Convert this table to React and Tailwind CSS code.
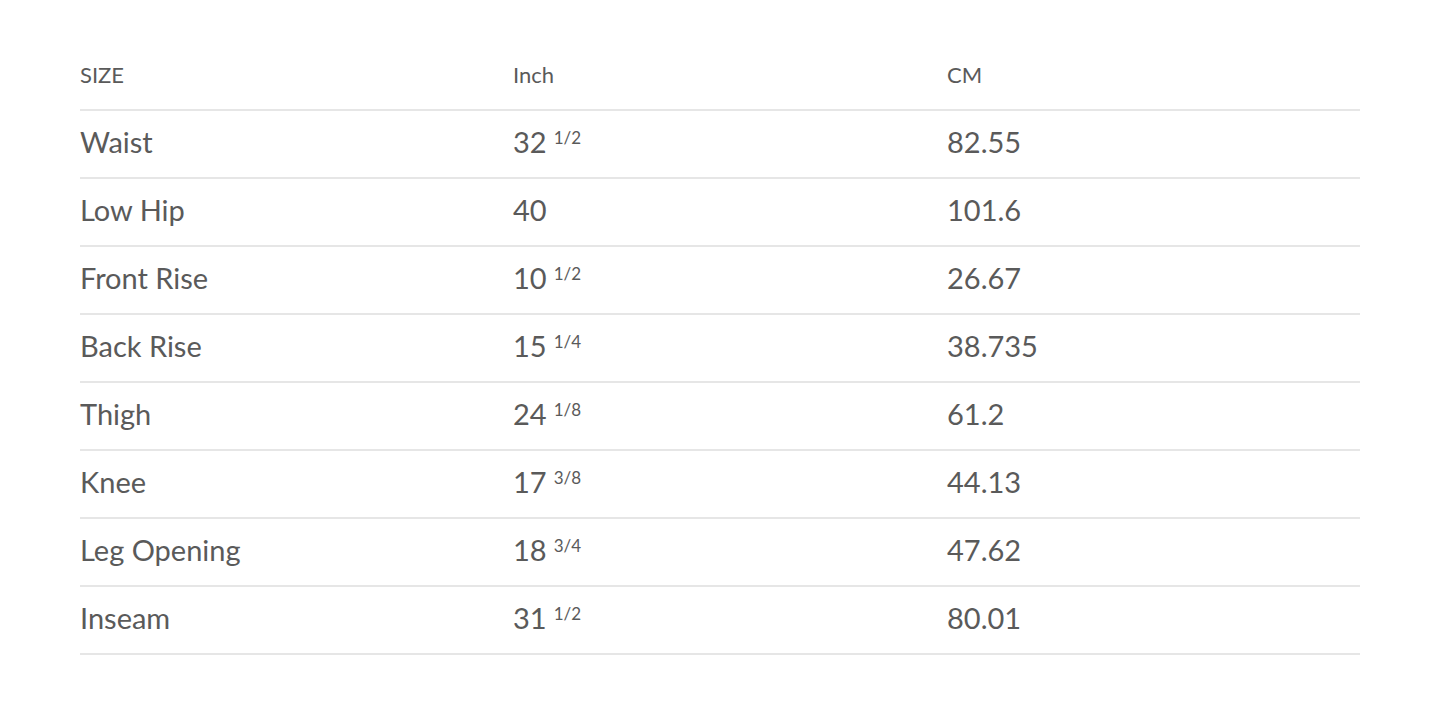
const rows = [
  ['Waist', '32', '1/2', '82.55'],
  ['Low Hip', '40', '', '101.6'],
  ['Front Rise', '10', '1/2', '26.67'],
  ['Back Rise', '15', '1/4', '38.735'],
  ['Thigh', '24', '1/8', '61.2'],
  ['Knee', '17', '3/8', '44.13'],
  ['Leg Opening', '18', '3/4', '47.62'],
  ['Inseam', '31', '1/2', '80.01'],
];

export default function App() {
  return (
    <div className="min-h-screen bg-white px-[80px] pt-[43px] font-['Lato',sans-serif] text-[#5a5a5a]">
      <div className="grid h-[68px] grid-cols-[433px_434px_1fr] items-center border-b-2 border-[#e6e6e6] pb-[3px] text-[22px] leading-none">
        <div>SIZE</div>
        <div>Inch</div>
        <div>CM</div>
      </div>
      {rows.map(([label, whole, frac, cm]) => (
        <div
          key={label}
          className="grid h-[68px] grid-cols-[433px_434px_1fr] items-center border-b-2 border-[#e6e6e6] pb-[5px] text-[29px] leading-none"
        >
          <div>{label}</div>
          <div>
            {whole}
            {frac && <span className="ml-[7px] align-[9px] text-[17px]">{frac}</span>}
          </div>
          <div>{cm}</div>
        </div>
      ))}
    </div>
  );
}
